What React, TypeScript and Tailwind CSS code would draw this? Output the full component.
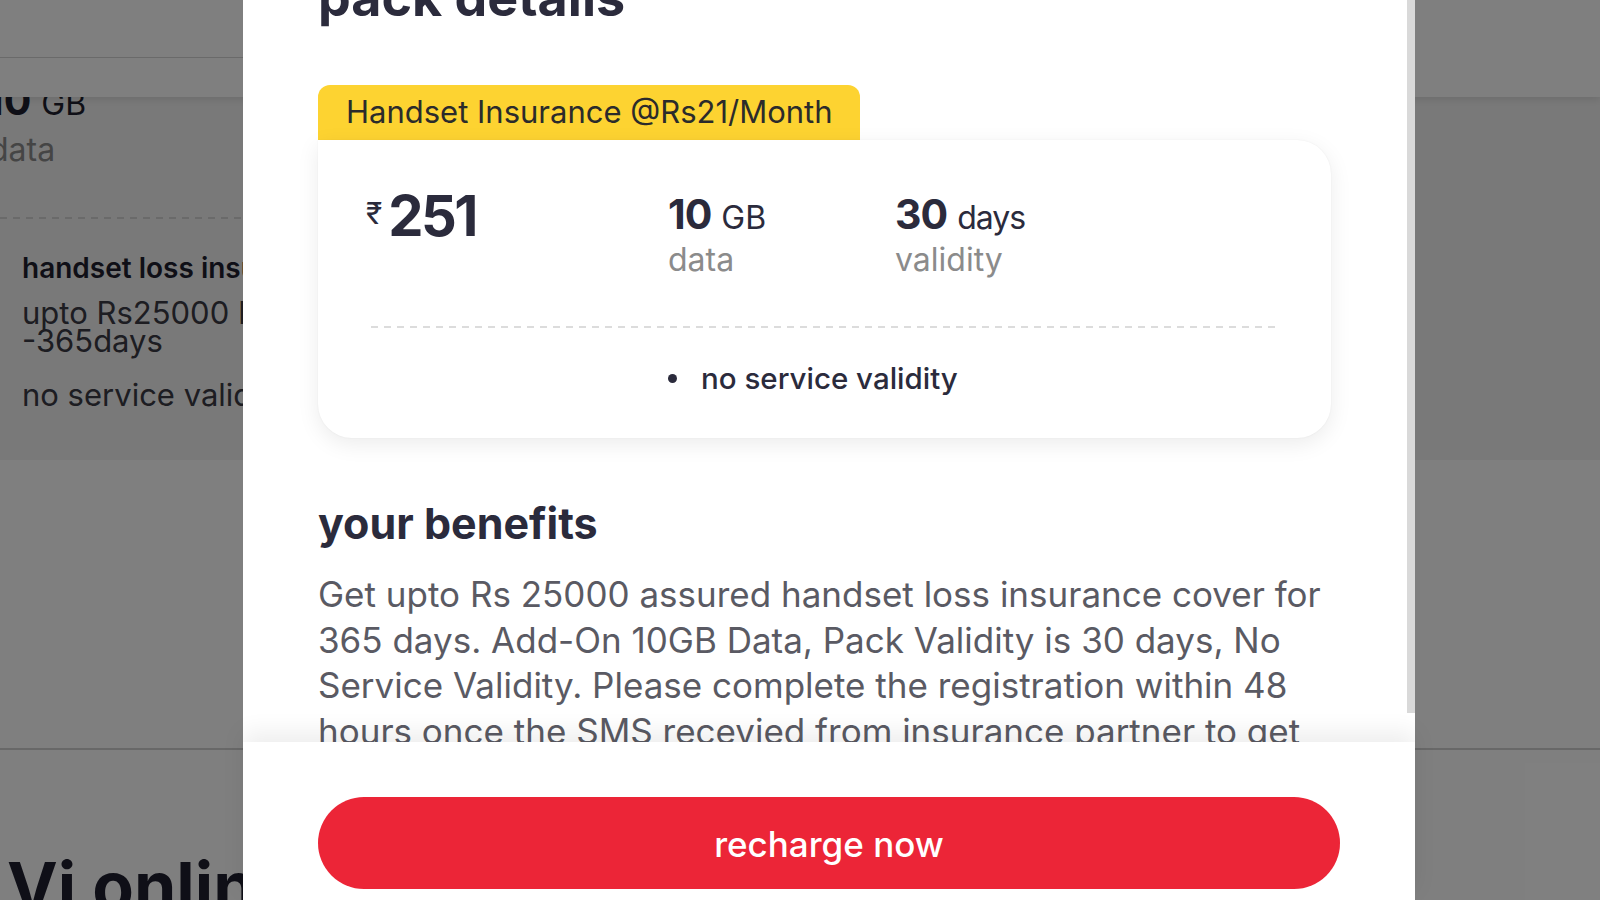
import React from "react";

const FONT = { fontFamily: "Inter, 'DejaVu Sans', 'Noto Sans', sans-serif" };

function BackgroundPage() {
  return (
    <div className="isolate flex h-full w-full flex-col bg-white">
      <header className="relative z-10 h-[97px] shrink-0 bg-white shadow-[0_3px_8px_rgba(0,0,0,0.10)]">
        <div className="h-[58px] w-[1000px] border-b border-[#d4d4d4]" />
      </header>
      <section className="h-[363px] shrink-0 overflow-hidden bg-[#f3f3f3] pl-[22px]">
        <div className="-mt-[19px] -ml-[36px] flex items-baseline gap-[10px] leading-[44px] text-[#1f1f2e]">
          <span className="text-[41px] font-bold">10</span>
          <span className="text-[32px]">GB</span>
        </div>
        <div className="-ml-[33px] mt-[4px] text-[32px] leading-[40px] text-[#8b8b8b]">data</div>
        <div className="mt-[47px] -ml-[22px] h-[2px] w-[600px] bg-[linear-gradient(to_right,#d4d4d4_55%,transparent_55%)] bg-[length:13px_2px]" />
        <div className="mt-[32px] whitespace-nowrap text-[28px] font-semibold leading-[34px] text-[#1f1f2e]">
          handset loss insurance
        </div>
        <div className="mt-[14px] whitespace-nowrap text-[31px] leading-[28px] text-[#3a3a44]">
          upto Rs25000 Insurance cover
          <br />
          -365days
        </div>
        <div className="mt-[20px] whitespace-nowrap text-[31px] leading-[40px] text-[#3a3a44]">
          no service validity
        </div>
      </section>
      <div className="h-[290px] shrink-0 border-b-2 border-[#d0d0d0] bg-white" />
      <div className="pl-[7px] pt-[102px]">
        <div className="whitespace-nowrap text-[68px] font-bold leading-[68px] text-[#1f1f2e]">
          Vi online recharge
        </div>
      </div>
    </div>
  );
}

function Modal() {
  return (
    <div className="absolute left-[243px] top-0 z-20 flex h-[900px] w-[1172px] flex-col bg-white">
      <div className="flex min-h-0 flex-1">
        <div className="min-w-0 flex-1 overflow-hidden pl-[75px] pr-[76px]">
          <h2 className="-mt-[31px] text-[52px] font-bold leading-[58px] text-[#2b2b3c]">pack details</h2>

          <div className="mt-[58px] flex h-[55px] w-[542px] items-center rounded-t-[12px] bg-[#fdd331] pl-[28px] text-[31px] text-[#2b2b2b]">
            Handset Insurance @Rs21/Month
          </div>

          <div className="rounded-[34px] rounded-tl-none bg-white px-[48px] pb-[42px] pt-[48px] shadow-[0_6px_22px_rgba(0,0,0,0.08),0_0_2px_rgba(0,0,0,0.06)]">
            <div className="grid grid-cols-[302px_227px_1fr] text-[#2b2b3c]">
              <div className="flex items-start">
                <span className="mt-[10px] text-[30px] leading-[30px]">₹</span>
                <span className="ml-[6px] text-[56px] font-bold leading-[56px] tracking-[-2.5px]">251</span>
              </div>
              <div className="mt-[4px]">
                <div className="flex items-baseline gap-[10px] leading-[44px]">
                  <span className="text-[41px] font-bold tracking-[-1px]">10</span>
                  <span className="text-[32px]">GB</span>
                </div>
                <div className="text-[32px] leading-[40px] text-[#8b8b8b]">data</div>
              </div>
              <div className="mt-[4px]">
                <div className="flex items-baseline gap-[10px] leading-[44px]">
                  <span className="text-[41px] font-bold tracking-[-1px]">30</span>
                  <span className="text-[32px] tracking-[-1px]">days</span>
                </div>
                <div className="text-[32px] leading-[40px] text-[#8b8b8b]">validity</div>
              </div>
            </div>

            <div className="ml-[5px] mr-[4px] mt-[46px] h-[2px] bg-[linear-gradient(to_right,#dcdcdc_55%,transparent_55%)] bg-[length:13px_2px]" />

            <div className="mt-[32px] flex items-center pl-[302px] text-[#2b2b3c]">
              <span className="h-[9px] w-[9px] rounded-full bg-[#2b2b3c]" />
              <span className="ml-[24px] text-[29.5px] font-medium leading-[36px]">no service validity</span>
            </div>
          </div>

          <h3 className="mt-[62px] text-[43px] font-bold leading-[46px] text-[#2b2b3c]">your benefits</h3>

          <p className="mt-[26px] text-[35px] leading-[45.5px] text-[#5a5a63]">
            Get upto Rs 25000 assured handset loss insurance cover for 365 days. Add-On 10GB Data, Pack Validity is 30
            days, No Service Validity. Please complete the registration within 48 hours once the SMS recevied from
            insurance partner to get insurance benefits.
          </p>
        </div>
        <div className="w-[8px] shrink-0">
          <div className="h-[713px] w-full bg-[#d9d9d9]" />
        </div>
      </div>

      <div className="relative z-10 h-[158px] shrink-0 bg-white px-[75px] pt-[55px] shadow-[0_-10px_22px_rgba(0,0,0,0.07)]">
        <button className="flex h-[92px] w-full items-center justify-center rounded-full bg-[#ec2537] pt-[3px] text-[35px] font-medium text-white">
          recharge now
        </button>
      </div>
    </div>
  );
}

export default function App() {
  return (
    <div className="relative h-[900px] w-[1600px] overflow-hidden" style={FONT}>
      <BackgroundPage />
      <div className="absolute inset-0 z-10 bg-black/50" />
      <Modal />
    </div>
  );
}
